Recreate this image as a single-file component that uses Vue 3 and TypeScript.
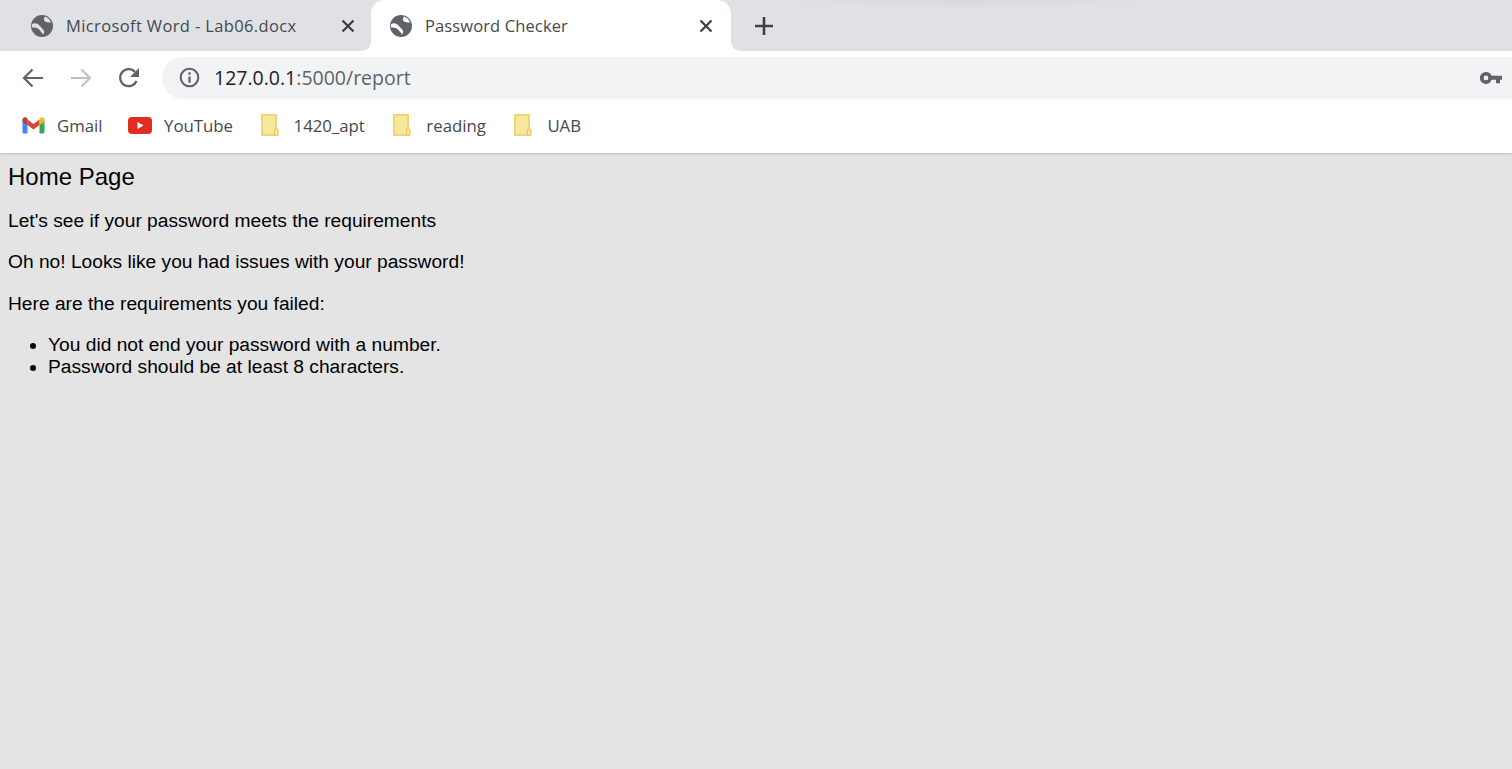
<script setup lang="ts">
const bookmarks = [
  { name: '1420_apt' },
  { name: 'reading' },
  { name: 'UAB' },
]
</script>

<template>
  <div class="window">
    <header class="chrome">
      <div class="tabstrip">
        <div class="tab">
          <svg class="favicon" viewBox="0 0 22 22">
            <circle cx="11" cy="11" r="11" fill="#5f6368" />
            <path d="M.8 9.500C3 7.500 6 8 8.500 10.500c1.500 1.500 2.500 3 4 4.500 1 1 1 3-.5 4.500-1.500-2-2.500-3.500-4-5C6 12.500 3.500 12.500 1 12.500zM14 1.500c-1 1.500-1.500 3-.5 4.500 1.200 1.500 3.500 1.500 6.500 1.500-1-3-3-5-6-6z" fill="#dfe1e5" />
          </svg>
          <span class="tab-title word">Microsoft Word - Lab06.docx</span>
          <svg class="close" viewBox="0 0 14 14"><path d="M1.500 1.500l11 11M12.500 1.500l-11 11" stroke="#3c4043" stroke-width="2.300" fill="none" /></svg>
        </div>
        <div class="tab active">
          <svg class="favicon" viewBox="0 0 22 22">
            <circle cx="11" cy="11" r="11" fill="#5f6368" />
            <path d="M.8 9.500C3 7.500 6 8 8.500 10.500c1.500 1.500 2.500 3 4 4.500 1 1 1 3-.5 4.500-1.500-2-2.500-3.500-4-5C6 12.500 3.500 12.500 1 12.500zM14 1.500c-1 1.500-1.500 3-.5 4.500 1.200 1.500 3.500 1.500 6.500 1.500-1-3-3-5-6-6z" fill="#fff" />
          </svg>
          <span class="tab-title checker">Password Checker</span>
          <svg class="close" viewBox="0 0 14 14"><path d="M1.500 1.500l11 11M12.500 1.500l-11 11" stroke="#3c4043" stroke-width="2.300" fill="none" /></svg>
        </div>
        <svg class="plus" viewBox="0 0 18 18"><path d="M9 0v18M0 9h18" stroke="#3c4043" stroke-width="2.600" fill="none" /></svg>
        <div class="strip-shade"></div>
      </div>
      <div class="toolbar">
        <svg class="nav" viewBox="0 0 22 20"><path d="M21 10H2.500M10.500 1.500L2 10l8.500 8.500" stroke="#5f6368" stroke-width="2.200" fill="none" /></svg>
        <svg class="nav" viewBox="0 0 22 20"><path d="M1 10h18.500M11.500 1.500L20 10l-8.500 8.500" stroke="#bdc1c6" stroke-width="2.200" fill="none" /></svg>
        <svg class="nav reload" viewBox="0 0 22 22"><path d="M18.500 14A8.500 8.500 0 1 1 17 5" stroke="#5f6368" stroke-width="2.300" fill="none" /><path d="M21 1v9h-9z" fill="#5f6368" /></svg>
        <div class="omnibox">
          <svg class="info" viewBox="0 0 22 22"><circle cx="11" cy="11" r="9.200" stroke="#5f6368" stroke-width="2.200" fill="none" /><path d="M11 10v6.500M11 5.500v2.500" stroke="#5f6368" stroke-width="2.400" /></svg>
          <span class="url"><span class="host">127.0.0.1</span>:5000/report</span>
          <svg class="key" viewBox="0 0 22 12"><path fill-rule="evenodd" d="M6 0a6 6 0 0 1 5.600 3.800H22v4h-2v3.500h-4V7.800h-4.400A6 6 0 1 1 6 0Zm0 3.500a2.400 2.400 0 1 0 0 4.800 2.400 2.400 0 0 0 0-4.800Z" fill="#5f6368" /></svg>
        </div>
      </div>
      <nav class="bookmarks">
        <a class="bookmark gmail-item">
          <svg class="gmail" viewBox="0 0 22 17">
            <path d="M0 3v12a1.500 1.500 0 0 0 1.500 1.500H5V7z" fill="#4285f4" />
            <path d="M22 3v12a1.500 1.500 0 0 1-1.500 1.500H17V7z" fill="#34a853" />
            <path d="M5 8V2.500L11 7l6-4.500V8l-6 4.500z" fill="#d9453a" />
            <path d="M0 5V2.500C0 .5 2.300-.5 3.800.6L5 1.500V8z" fill="#c5392f" />
            <path d="M22 5V2.500C22 .5 19.700-.5 18.200.6L17 1.500V8z" fill="#f4bc1c" />
          </svg>
          <span>Gmail</span>
        </a>
        <a class="bookmark yt-item">
          <svg class="youtube" viewBox="0 0 24 17">
            <rect width="24" height="17" rx="4" fill="#e22d22" />
            <path d="M9.500 5v7l6-3.500z" fill="#fff" />
          </svg>
          <span>YouTube</span>
        </a>
        <a v-for="b in bookmarks" :key="b.name" class="bookmark file-item">
          <svg class="file" viewBox="0 0 18 22">
            <path d="M1 1h14v20H1z" fill="#f8e79c" stroke="#eed678" stroke-width="2" />
            <rect x="13.500" y="15" width="3.500" height="6.500" rx="1" fill="#f8e79c" stroke="#e5c860" stroke-width="1.200" />
          </svg>
          <span>{{ b.name }}</span>
        </a>
      </nav>
    </header>
    <main class="page">
      <h1 class="title">Home Page</h1>
      <p>Let's see if your password meets the requirements</p>
      <p>Oh no! Looks like you had issues with your password!</p>
      <p>Here are the requirements you failed:</p>
      <ul>
        <li>You did not end your password with a number.</li>
        <li>Password should be at least 8 characters.</li>
      </ul>
    </main>
  </div>
</template>

<style>
html, body { margin: 0; height: 100%; overflow: hidden; }
</style>

<style scoped>
.window { height: 769px; display: flex; flex-direction: column; background: #e4e4e4; overflow: hidden; }
.chrome { background: #fff; box-shadow: 0 1px 2px rgba(0,0,0,.18); position: relative; font-family: "Open Sans", "Noto Sans", sans-serif; color: #3c4043; }
.tabstrip { height: 51px; background: #dfe1e5; display: flex; align-items: center; position: relative; }
.strip-shade { position: absolute; top: 0; left: 780px; width: 370px; height: 10px; background: radial-gradient(ellipse 50% 100% at 50% 0, rgba(0,0,0,.035), transparent); }
.tab { width: 371px; height: 51px; box-sizing: border-box; padding: 0 16px 0 31px; display: flex; align-items: center; flex: none; }
.tab.active { width: 360px; background: #fff; border-radius: 14px 14px 0 0; padding-left: 19px; padding-right: 18px; position: relative; }
.tab.active::before, .tab.active::after { content: ""; position: absolute; bottom: 0; width: 9px; height: 9px; }
.tab.active::before { left: -9px; background: radial-gradient(circle at 0 0, transparent 8.500px, #fff 9px); }
.tab.active::after { right: -9px; background: radial-gradient(circle at 100% 0, transparent 8.500px, #fff 9px); }
.favicon { width: 22px; height: 22px; flex: none; }
.tab-title { margin-left: 13px; font-size: 16.500px; flex: 1; white-space: nowrap; color: #45484c; }
.word { letter-spacing: .37px; }
.checker { letter-spacing: .12px; }
.close { width: 14px; height: 14px; flex: none; }
.plus { width: 18px; height: 18px; margin-left: 24px; }
.toolbar { height: 51px; box-sizing: border-box; padding: 2px 0 0 22px; display: flex; align-items: center; }
.nav { width: 22px; height: 20px; flex: none; margin-right: 26px; }
.reload { width: 22px; height: 22px; margin-right: 22px; }
.omnibox { flex: 1; height: 42px; background: #f1f3f4; border-radius: 21px 0 0 21px; display: flex; align-items: center; padding: 0 10px 0 17px; }
.info { width: 21px; height: 21px; flex: none; }
.url { margin-left: 14px; font-size: 19.500px; color: #5f6368; flex: 1; white-space: nowrap; }
.host { color: #202124; }
.key { width: 22px; height: 12px; flex: none; }
.bookmarks { height: 51px; box-sizing: border-box; padding: 0 0 5px 22px; display: flex; align-items: center; }
.bookmark { display: flex; align-items: center; font-size: 16.800px; color: #45484c; white-space: nowrap; }
.gmail-item { margin-right: 25.500px; }
.yt-item { margin-right: 27.500px; }
.file-item { margin-right: 28.500px; }
.gmail { width: 23px; height: 17px; margin-right: 12px; }
.youtube { width: 24px; height: 17px; margin-right: 12px; }
.file { width: 18px; height: 22px; margin-right: 15px; }
.page { flex: 1; padding: 0 8px; font-family: "Liberation Sans", Arial, sans-serif; font-size: 19.200px; color: #000; }
.title { margin: 10px 0 0; font-size: 24px; font-weight: 400; }
p { margin: 19.200px 0; }
ul { margin: 19.200px 0; padding-left: 40px; }
</style>
